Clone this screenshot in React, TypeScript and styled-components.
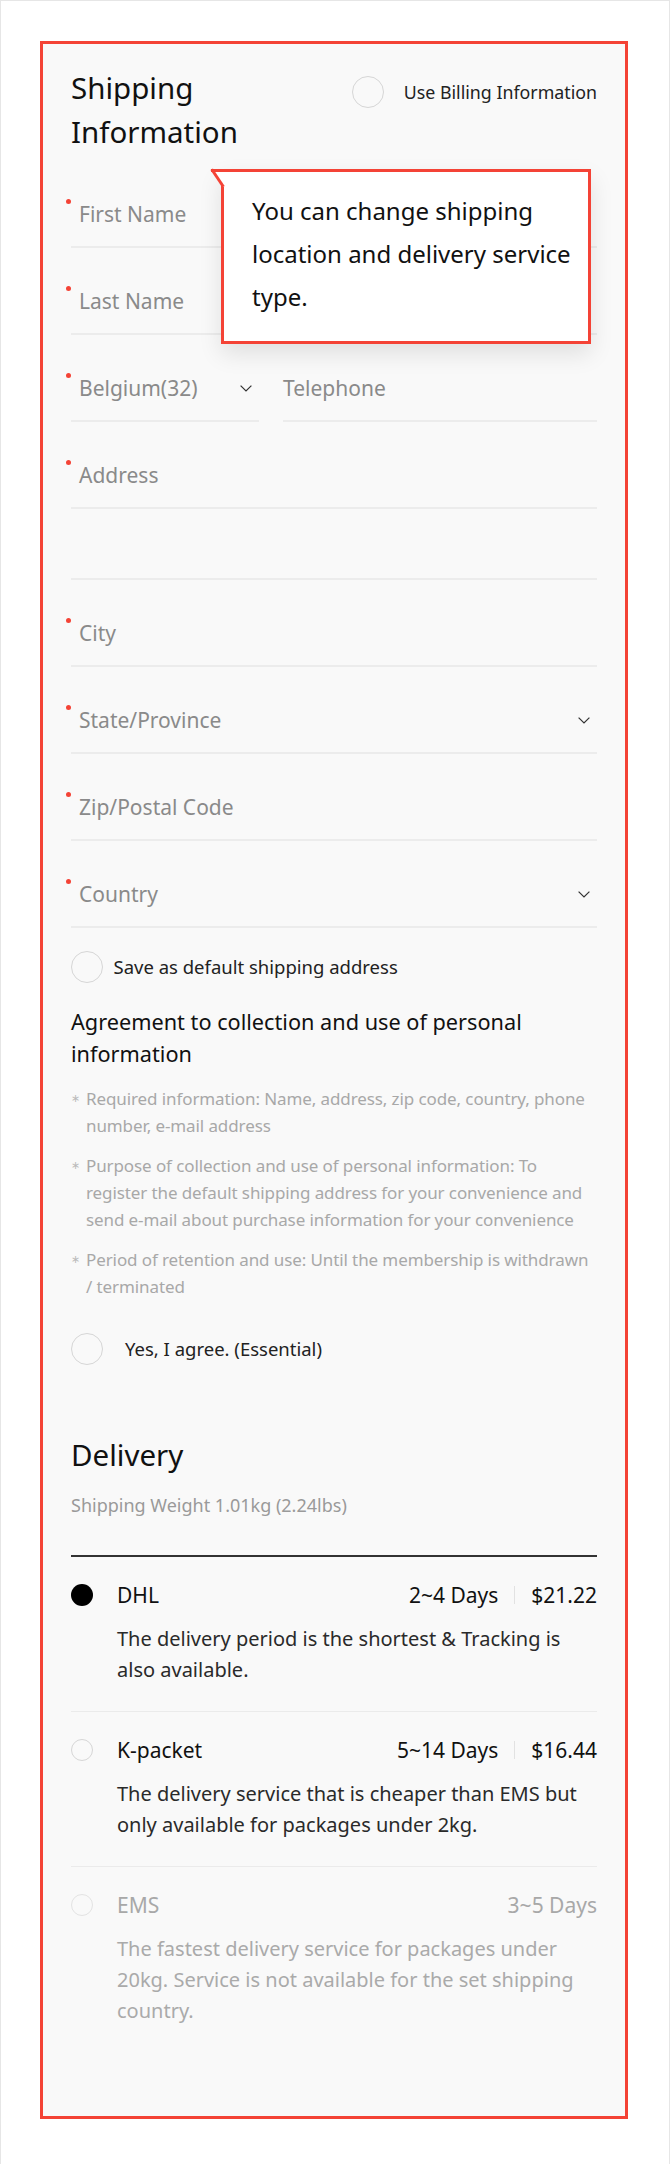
import React from "react";
import styled, { createGlobalStyle } from "styled-components";

const GlobalStyle = createGlobalStyle`
  html, body { margin: 0; padding: 0; background: #fff; }
  body { font-family: "Noto Sans", "Open Sans", sans-serif; -webkit-font-smoothing: antialiased; }
  * { box-sizing: border-box; }
`;

const RED = "#f44336";

const Page = styled.div`
  min-height: 2164px;
  border: 1px solid #e6e6e6;
  padding: 40px 41px 45px 39px;
`;

const Card = styled.section`
  position: relative;
  border: 3px solid ${RED};
  background: #f9f9f9;
  padding: 22px 28px 64px;
`;

const Header = styled.div`
  display: flex;
  justify-content: space-between;
  align-items: flex-start;
`;

const Title = styled.h2`
  margin: 0;
  font-size: 29.5px;
  line-height: 44px;
  font-weight: 400;
  color: #111;
  max-width: 260px;
`;

const Radio = styled.span<{ $size: number; $checked?: boolean; $muted?: boolean }>`
  flex: none;
  display: block;
  width: ${(p) => p.$size}px;
  height: ${(p) => p.$size}px;
  border-radius: 50%;
  border: ${(p) => (p.$checked ? "none" : `1.5px solid ${p.$muted ? "#e3e3e3" : "#d6d6d6"}`)};
  background: ${(p) => (p.$checked ? "#000" : "transparent")};
`;

const CheckRow = styled.label<{ $gap: number; $top: number; $size?: number }>`
  display: flex;
  align-items: center;
  gap: ${(p) => p.$gap}px;
  margin-top: ${(p) => p.$top}px;
  font-size: ${(p) => p.$size ?? 18.5}px;
  line-height: 32px;
  color: #222;
`;

const Fields = styled.div`
  margin-top: 7px;
  display: flex;
  flex-direction: column;
`;

const FieldPair = styled.div`
  display: flex;
  gap: 24px;
`;

const Field = styled.div<{ $h?: number; $w?: number; $plain?: boolean }>`
  position: relative;
  height: ${(p) => p.$h ?? 87}px;
  flex: ${(p) => (p.$w ? `0 0 ${p.$w}px` : "1 1 auto")};
  display: flex;
  align-items: flex-end;
  padding: 0 0 12px ${(p) => (p.$plain ? 0 : 8)}px;
  border-bottom: 2px solid #ececec;
`;

const FieldLine = styled.div`
  display: flex;
  align-items: center;
  width: 100%;
  height: 40px;
`;

const Placeholder = styled.span<{ $required?: boolean }>`
  position: relative;
  font-size: 21px;
  line-height: 40px;
  color: #8a8a8a;
  &::before {
    content: "";
    display: ${(p) => (p.$required ? "block" : "none")};
    position: absolute;
    left: -13px;
    top: 5px;
    width: 5px;
    height: 5px;
    border-radius: 50%;
    background: ${RED};
  }
`;

const ChevronBox = styled.span`
  margin-left: auto;
  margin-right: 7px;
  display: flex;
`;

const Chevron = () => (
  <ChevronBox>
    <svg width="12" height="7" viewBox="0 0 12 7">
      <path d="M0.6 0.6 L6 6 L11.4 0.6" fill="none" stroke="#333" strokeWidth="1.2" />
    </svg>
  </ChevronBox>
);

const Tooltip = styled.div`
  position: absolute;
  left: 178px;
  top: 125px;
  width: 370px;
  padding: 17px 16px 23px 28px;
  background: #fff;
  border: 3px solid ${RED};
  box-shadow: 0 10px 22px rgba(0, 0, 0, 0.1);
  font-size: 24px;
  line-height: 43px;
  color: #111;
  z-index: 2;
`;

const TailSvg = styled.svg`
  position: absolute;
  left: -13px;
  top: -3px;
  overflow: visible;
`;

const Tail = () => (
  <TailSvg width="16" height="20" viewBox="0 0 16 20">
    <polygon points="1.5,1.5 16,1.5 16,20 13,20 13,18 11.5,17" fill="#fff" />
    <path d="M0 1.5 H16" stroke={RED} strokeWidth="3" />
    <path d="M1.5 1.5 L11.6 16.5" stroke={RED} strokeWidth="3" strokeLinecap="square" />
  </TailSvg>
);

const AgreeTitle = styled.h3`
  margin: 23px 0 0;
  font-size: 21.7px;
  line-height: 32px;
  font-weight: 400;
  color: #111;
`;

const Bullets = styled.ul`
  list-style: none;
  margin: 15px 0 0;
  padding: 0;
  display: flex;
  flex-direction: column;
  gap: 13px;
`;

const Bullet = styled.li`
  position: relative;
  padding-left: 15px;
  font-size: 17px;
  line-height: 27px;
  color: #a8a8a8;
  letter-spacing: -0.1px;
  &::before {
    content: "∗";
    position: absolute;
    left: 0;
    top: 0;
    font-family: "DejaVu Sans", sans-serif;
    font-size: 11px;
    color: #bbb;
  }
`;

const SectionTitle = styled.h2`
  margin: 68px 0 0;
  font-size: 29.5px;
  line-height: 44px;
  font-weight: 400;
  color: #111;
`;

const Weight = styled.p`
  margin: 14px 0 0;
  font-size: 18px;
  line-height: 28px;
  color: #9a9a9a;
`;

const Options = styled.div`
  margin-top: 36px;
  border-top: 2px solid #333;
`;

const Option = styled.div`
  display: grid;
  grid-template-columns: 46px 1fr;
  padding: 23px 0 26px;
  border-bottom: 1px solid #ebebeb;
  &:last-child {
    border-bottom: none;
  }
`;

const RadioCell = styled.div`
  height: 30px;
  display: flex;
  align-items: center;
`;

const OptionHead = styled.div<{ $muted?: boolean }>`
  display: flex;
  align-items: center;
  font-size: 21px;
  line-height: 30px;
  color: ${(p) => (p.$muted ? "#a8a8a8" : "#111")};
`;

const Meta = styled.div`
  margin-left: auto;
  display: flex;
  align-items: center;
`;

const Sep = styled.span`
  width: 1px;
  height: 18px;
  background: #e2e2e2;
  margin: 0 16px;
`;

const Desc = styled.p<{ $muted?: boolean }>`
  grid-column: 2;
  margin: 13px 0 0;
  font-size: 20px;
  line-height: 31px;
  color: ${(p) => (p.$muted ? "#aaa" : "#2a2a2a")};
`;

type Opt = { name: string; days: string; price?: string; desc: string; checked?: boolean; muted?: boolean };

const options: Opt[] = [
  { name: "DHL", days: "2~4 Days", price: "$21.22", desc: "The delivery period is the shortest & Tracking is also available.", checked: true },
  { name: "K-packet", days: "5~14 Days", price: "$16.44", desc: "The delivery service that is cheaper than EMS but only available for packages under 2kg." },
  { name: "EMS", days: "3~5 Days", desc: "The fastest delivery service for packages under 20kg. Service is not available for the set shipping country.", muted: true },
];

export default function App() {
  return (
    <>
      <GlobalStyle />
      <Page>
        <Card>
          <Header>
            <Title>Shipping Information</Title>
            <CheckRow $gap={20} $top={10} $size={17.8}>
              <Radio $size={32} />
              <span>Use Billing Information</span>
            </CheckRow>
          </Header>

          <Tooltip>
            <Tail />
            You can change shipping location and delivery service type.
          </Tooltip>

          <Fields>
            <Field>
              <FieldLine><Placeholder $required>First Name</Placeholder></FieldLine>
            </Field>
            <Field>
              <FieldLine><Placeholder $required>Last Name</Placeholder></FieldLine>
            </Field>
            <FieldPair>
              <Field $w={188}>
                <FieldLine>
                  <Placeholder $required>Belgium(32)</Placeholder>
                  <Chevron />
                </FieldLine>
              </Field>
              <Field $plain>
                <FieldLine><Placeholder>Telephone</Placeholder></FieldLine>
              </Field>
            </FieldPair>
            <Field>
              <FieldLine><Placeholder $required>Address</Placeholder></FieldLine>
            </Field>
            <Field $h={71}>
              <FieldLine />
            </Field>
            <Field>
              <FieldLine><Placeholder $required>City</Placeholder></FieldLine>
            </Field>
            <Field>
              <FieldLine>
                <Placeholder $required>State/Province</Placeholder>
                <Chevron />
              </FieldLine>
            </Field>
            <Field>
              <FieldLine><Placeholder $required>Zip/Postal Code</Placeholder></FieldLine>
            </Field>
            <Field>
              <FieldLine>
                <Placeholder $required>Country</Placeholder>
                <Chevron />
              </FieldLine>
            </Field>
          </Fields>

          <CheckRow $gap={10.5} $top={23}>
            <Radio $size={32} />
            <span>Save as default shipping address</span>
          </CheckRow>

          <AgreeTitle>Agreement to collection and use of personal information</AgreeTitle>
          <Bullets>
            <Bullet>Required information: Name, address, zip code, country, phone number, e-mail address</Bullet>
            <Bullet>Purpose of collection and use of personal information: To register the default shipping address for your convenience and send e-mail about purchase information for your convenience</Bullet>
            <Bullet>Period of retention and use: Until the membership is withdrawn / terminated</Bullet>
          </Bullets>

          <CheckRow $gap={22} $top={33}>
            <Radio $size={32} />
            <span>Yes, I agree. (Essential)</span>
          </CheckRow>

          <SectionTitle>Delivery</SectionTitle>
          <Weight>Shipping Weight 1.01kg (2.24lbs)</Weight>

          <Options>
            {options.map((o) => (
              <Option key={o.name}>
                <RadioCell>
                  <Radio $size={22} $checked={o.checked} $muted={o.muted} />
                </RadioCell>
                <OptionHead $muted={o.muted}>
                  <span>{o.name}</span>
                  <Meta>
                    <span>{o.days}</span>
                    {o.price && (
                      <>
                        <Sep />
                        <span>{o.price}</span>
                      </>
                    )}
                  </Meta>
                </OptionHead>
                <Desc $muted={o.muted}>{o.desc}</Desc>
              </Option>
            ))}
          </Options>
        </Card>
      </Page>
    </>
  );
}
